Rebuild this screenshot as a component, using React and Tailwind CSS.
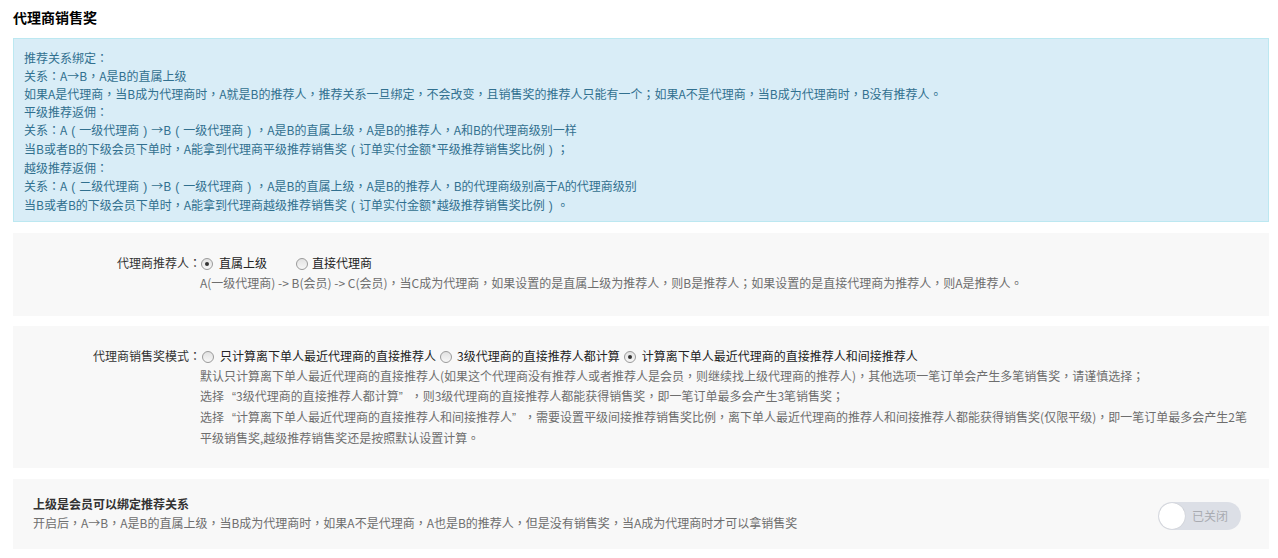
import React from "react";

function T({ children }) {
  const parts = String(children).split(/([，。：；（）、“”])/);
  return (
    <>
      {parts.map((p, i) => {
        if (p === "") return null;
        if (p === "“") {
          return (
            <span key={i} className="inline-block w-[12px] text-right font-['Liberation_Sans']">
              {p}
            </span>
          );
        }
        if (p === "”") {
          return (
            <span key={i} className="inline-block w-[12px] text-left font-['Liberation_Sans']">
              {p}
            </span>
          );
        }
        if (p === "（" || p === "）") {
          return (
            <span key={i} className="inline-block w-[12px] text-center font-['Liberation_Sans']">
              {p === "（" ? "(" : ")"}
            </span>
          );
        }
        if (/^[，。：；、]$/.test(p)) {
          return (
            <span key={i} className="font-['Noto_Sans_CJK_TC']">
              {p}
            </span>
          );
        }
        return <React.Fragment key={i}>{p}</React.Fragment>;
      })}
    </>
  );
}

function Radio({ checked }) {
  return (
    <span className="relative inline-block w-[12px] h-[12px] rounded-full border border-[#9a9a9a] bg-gradient-to-b from-[#e2e2e2] to-[#f7f7f7] shrink-0 mt-[5px]">
      {checked && (
        <span className="absolute left-[3px] top-[3px] w-[4px] h-[4px] rounded-full bg-[#333]" />
      )}
    </span>
  );
}

export default function App() {
  const font = { fontFamily: '"Noto Sans CJK SC", "Liberation Sans", sans-serif' };
  return (
    <div className="bg-white w-[1278px] h-[558px] overflow-hidden text-[12px]" style={font}>
      <div className="pl-[13px] pr-[9px]">
        <div className="pt-[8px] h-[38px] text-[14px] leading-[18px] font-bold text-black">代理商销售奖</div>

        <div className="bg-[#d9edf7] border border-[#bce8f1] text-[#31708f] leading-[18px] px-[10px] py-[10px] h-[184px]">
          <div><T>推荐关系绑定：</T></div>
          <div><T>关系：A→B，A是B的直属上级</T></div>
          <div><T>如果A是代理商，当B成为代理商时，A就是B的推荐人，推荐关系一旦绑定，不会改变，且销售奖的推荐人只能有一个；如果A不是代理商，当B成为代理商时，B没有推荐人。</T></div>
          <div><T>平级推荐返佣：</T></div>
          <div><T>关系：A（一级代理商）→B（一级代理商），A是B的直属上级，A是B的推荐人，A和B的代理商级别一样</T></div>
          <div><T>当B或者B的下级会员下单时，A能拿到代理商平级推荐销售奖（订单实付金额*平级推荐销售奖比例）；</T></div>
          <div><T>越级推荐返佣：</T></div>
          <div><T>关系：A（二级代理商）→B（一级代理商），A是B的直属上级，A是B的推荐人，B的代理商级别高于A的代理商级别</T></div>
          <div><T>当B或者B的下级会员下单时，A能拿到代理商越级推荐销售奖（订单实付金额*越级推荐销售奖比例）。</T></div>
        </div>

        <div className="mt-[11px] bg-[#f8f8f8] h-[83px] pt-[20px] flex leading-[20px]">
          <div className="w-[188px] text-right text-[#333] shrink-0"><T>代理商推荐人：</T></div>
          <div className="flex flex-col">
            <div className="flex items-start">
              <Radio checked />
              <span className="ml-[6px] text-[#222]">直属上级</span>
              <span className="ml-[29px] flex"><Radio /></span>
              <span className="ml-[4px] text-[#222]">直接代理商</span>
            </div>
            <div className="text-[#6e6e6e] whitespace-nowrap -ml-[1px]"><T>A(一级代理商) -&gt; B(会员) -&gt; C(会员)，当C成为代理商，如果设置的是直属上级为推荐人，则B是推荐人；如果设置的是直接代理商为推荐人，则A是推荐人。</T></div>
          </div>
        </div>

        <div className="mt-[10px] bg-[#f8f8f8] h-[142px] pt-[20px] flex leading-[20px]">
          <div className="w-[188px] text-right text-[#333] shrink-0"><T>代理商销售奖模式：</T></div>
          <div className="flex flex-col">
            <div className="flex items-start">
              <span className="ml-[1px] flex"><Radio /></span>
              <span className="ml-[6px] text-[#222]">只计算离下单人最近代理商的直接推荐人</span>
              <span className="ml-[4px] flex"><Radio /></span>
              <span className="ml-[5px] text-[#222]">3级代理商的直接推荐人都计算</span>
              <span className="ml-[4px] flex"><Radio checked /></span>
              <span className="ml-[6px] text-[#222]">计算离下单人最近代理商的直接推荐人和间接推荐人</span>
            </div>
            <div className="text-[#6e6e6e] whitespace-nowrap -ml-[1px]">
              <div><T>默认只计算离下单人最近代理商的直接推荐人(如果这个代理商没有推荐人或者推荐人是会员，则继续找上级代理商的推荐人)，其他选项一笔订单会产生多笔销售奖，请谨慎选择；</T></div>
              <div><T>选择“3级代理商的直接推荐人都计算”，则3级代理商的直接推荐人都能获得销售奖，即一笔订单最多会产生3笔销售奖；</T></div>
              <div><T>选择“计算离下单人最近代理商的直接推荐人和间接推荐人”，需要设置平级间接推荐销售奖比例，离下单人最近代理商的推荐人和间接推荐人都能获得销售奖(仅限平级)，即一笔订单最多会产生2笔</T></div>
              <div><T>平级销售奖,越级推荐销售奖还是按照默认设置计算。</T></div>
            </div>
          </div>
        </div>

        <div className="mt-[11px] bg-[#f8f8f8] h-[70px] pl-[20px] pr-[28px] flex items-center justify-between">
          <div className="flex flex-col">
            <div className="font-bold text-[#333] leading-[18px]">上级是会员可以绑定推荐关系</div>
            <div className="text-[#6e6e6e] leading-[20px] whitespace-nowrap"><T>开启后，A→B，A是B的直属上级，当B成为代理商时，如果A不是代理商，A也是B的推荐人，但是没有销售奖，当A成为代理商时才可以拿销售奖</T></div>
          </div>
          <div className="relative w-[83px] h-[28px] rounded-full bg-[#dcdfe6] mt-[4px] shrink-0">
            <span className="absolute left-[1px] top-[1px] w-[26px] h-[26px] rounded-full bg-white shadow-[0_0_1px_rgba(0,0,0,0.25)]" />
            <span className="absolute left-[34px] top-0 leading-[28px] text-[#a9abb1]">已关闭</span>
          </div>
        </div>
      </div>
    </div>
  );
}
